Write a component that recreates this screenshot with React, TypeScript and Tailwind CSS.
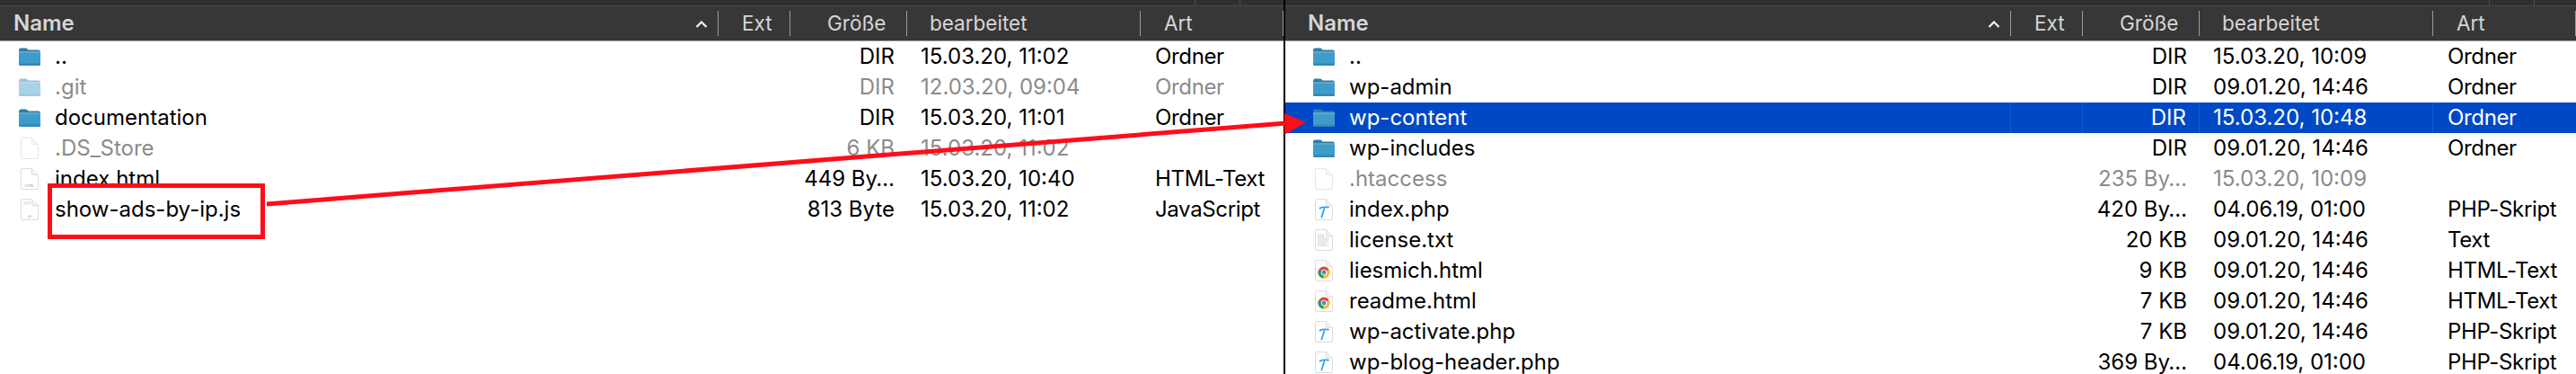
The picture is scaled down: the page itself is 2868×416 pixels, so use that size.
type Kind = "folder" | "blank" | "html" | "js" | "php" | "txt" | "chrome";

type Row = {
  icon: Kind;
  name: string;
  size: string;
  date: string;
  type: string;
  muted?: boolean;
  selected?: boolean;
};

const leftRows: Row[] = [
  { icon: "folder", name: "..", size: "DIR", date: "15.03.20, 11:02", type: "Ordner" },
  { icon: "folder", name: ".git", size: "DIR", date: "12.03.20, 09:04", type: "Ordner", muted: true },
  { icon: "folder", name: "documentation", size: "DIR", date: "15.03.20, 11:01", type: "Ordner" },
  { icon: "blank", name: ".DS_Store", size: "6 KB", date: "15.03.20, 11:02", type: "", muted: true },
  { icon: "html", name: "index.html", size: "449 By…", date: "15.03.20, 10:40", type: "HTML-Text" },
  { icon: "js", name: "show-ads-by-ip.js", size: "813 Byte", date: "15.03.20, 11:02", type: "JavaScript" },
];

const rightRows: Row[] = [
  { icon: "folder", name: "..", size: "DIR", date: "15.03.20, 10:09", type: "Ordner" },
  { icon: "folder", name: "wp-admin", size: "DIR", date: "09.01.20, 14:46", type: "Ordner" },
  { icon: "folder", name: "wp-content", size: "DIR", date: "15.03.20, 10:48", type: "Ordner", selected: true },
  { icon: "folder", name: "wp-includes", size: "DIR", date: "09.01.20, 14:46", type: "Ordner" },
  { icon: "blank", name: ".htaccess", size: "235 By…", date: "15.03.20, 10:09", type: "", muted: true },
  { icon: "php", name: "index.php", size: "420 By…", date: "04.06.19, 01:00", type: "PHP-Skript" },
  { icon: "txt", name: "license.txt", size: "20 KB", date: "09.01.20, 14:46", type: "Text" },
  { icon: "chrome", name: "liesmich.html", size: "9 KB", date: "09.01.20, 14:46", type: "HTML-Text" },
  { icon: "chrome", name: "readme.html", size: "7 KB", date: "09.01.20, 14:46", type: "HTML-Text" },
  { icon: "php", name: "wp-activate.php", size: "7 KB", date: "09.01.20, 14:46", type: "PHP-Skript" },
  { icon: "php", name: "wp-blog-header.php", size: "369 By…", date: "04.06.19, 01:00", type: "PHP-Skript" },
];

function FolderIcon({ muted }: { muted?: boolean }) {
  return (
    <svg width="24" height="20" viewBox="0 0 24 20" className={muted ? "opacity-45" : ""}>
      <path d="M0 3 Q0 0.5 2 0.5 H8 Q9.5 0.5 10 2 L10.5 2.5 H22 Q24 2.5 24 5 V8 H0 Z" fill="#2f7ea6" />
      <path d="M0 5.5 H24 V18 Q24 20 22 20 H2 Q0 20 0 18 Z" fill="#3d9ccb" />
      <rect x="0" y="4.5" width="24" height="1" fill="#8fc6de" />
      <rect x="0" y="17.5" width="24" height="2.5" rx="1.5" fill="#3588b3" />
    </svg>
  );
}

function ChromeGlyph() {
  return (
    <g>
      <circle cx="10" cy="14" r="6.5" fill="#e2463a" />
      <path d="M10 14 L4.4 10.8 A6.5 6.5 0 0 0 9.2 20.45 Z" fill="#2f9d4e" />
      <path d="M10 14 L15.65 10.8 A6.5 6.5 0 0 1 9.2 20.45 Z" fill="#f5c534" />
      <circle cx="10" cy="14" r="3.2" fill="#fff" />
      <circle cx="10" cy="14" r="2.4" fill="#4a86e8" />
    </g>
  );
}

function FileIcon({ kind, muted }: { kind: Kind; muted?: boolean }) {
  return (
    <svg width="20" height="24" viewBox="0 0 20 24" className={muted ? "opacity-70" : ""}>
      <path
        d="M1.5 0.5 H12.5 L19.5 7.5 V22 Q19.5 23.5 18 23.5 H2 Q0.5 23.5 0.5 22 V1.5 Q0.5 0.5 1.5 0.5 Z"
        fill="#fff"
        stroke="#dcdcdc"
      />
      <path d="M12.5 0.5 V6 Q12.5 7.5 14 7.5 H19.5" fill="#f3f3f3" stroke="#dcdcdc" />
      {kind === "html" && (
        <text x="10" y="20.5" textAnchor="middle" fontSize="3.6" fill="#9a9a9a" fontFamily="Inter, sans-serif">
          HTML
        </text>
      )}
      {kind === "js" && (
        <>
          <rect x="3" y="3" width="8" height="4" fill="#ececec" />
          <text x="10" y="20.5" textAnchor="middle" fontSize="3.6" fill="#9a9a9a" fontFamily="Inter, sans-serif">
            JS
          </text>
        </>
      )}
      {kind === "php" && (
        <path d="M5.5 10.6 Q10 8.6 15 9.6 M10.8 9.6 L7.4 20.5" fill="none" stroke="#19a2ee" strokeWidth="1.7" strokeLinecap="round" />
      )}
      {kind === "txt" && (
        <path
          d="M3 6 H10 M3 8 H11 M3 10 H16 M3 12 H15 M3 14 H16 M3 16 H13 M3 18 H15"
          stroke="#c4c4c4"
          strokeWidth="0.9"
          strokeDasharray="2 0.6"
        />
      )}
      {kind === "chrome" && <ChromeGlyph />}
    </svg>
  );
}

function RowIcon({ row }: { row: Row }) {
  if (row.icon === "folder") return <FolderIcon muted={row.muted} />;
  return (
    <span className="flex w-6 justify-center">
      <FileIcon kind={row.icon} muted={row.muted} />
    </span>
  );
}

function HeaderCell({ className, children }: { className: string; children: React.ReactNode }) {
  return (
    <div className={`relative flex h-full items-center ${className}`}>
      {children}
      <span className="absolute top-[5px] right-0 h-[28px] w-px bg-[#9c9c9c]" />
    </div>
  );
}

function Pane({ rows, nameCol, namePad, className }: { rows: Row[]; nameCol: string; namePad: string; className: string }) {
  return (
    <div className={`flex shrink-0 flex-col ${className}`}>
      <div className="h-[6px] shrink-0 bg-[#2f2f2f]" />
      <div className="h-px shrink-0 bg-[#4c4c4c]" />
      <div className="flex h-[39px] shrink-0 items-center border-b border-[#a3a3a3] bg-[#373737] text-[22.5px] text-[#d6d6d6]">
        <HeaderCell className={`${nameCol} justify-between pr-[12px] text-[24px] font-semibold ${namePad}`}>
          <span>Name</span>
          <svg width="14" height="8" viewBox="0 0 14 8" className="mt-px" fill="none">
            <path d="M1.5 7 L7 1.5 L12.5 7" stroke="#f2f2f2" strokeWidth="2.2" />
          </svg>
        </HeaderCell>
        <HeaderCell className="w-[80px] pl-[26px]">Ext</HeaderCell>
        <HeaderCell className="w-[130px] pl-[41px]">Größe</HeaderCell>
        <HeaderCell className="w-[260px] pl-[25px]">bearbeitet</HeaderCell>
        <HeaderCell className="w-[159px] pl-[26px]">Art</HeaderCell>
      </div>
      {rows.map((row) => (
        <div
          key={row.name}
          className={`flex h-[34px] shrink-0 items-center ${row.selected ? "bg-[#0049c6] text-white" : row.muted ? "text-[#8b8b8b]" : "text-black"}`}
        >
          <div className={`flex h-full ${nameCol} items-center ${namePad} ${row.selected ? "border-r border-[#1a5bcb]" : ""}`}>
            <span className="ml-[6px] mr-[16px] flex w-6 justify-center">
              <RowIcon row={row} />
            </span>
            <span className="truncate">{row.name}</span>
          </div>
          <div className={`h-full w-[80px] ${row.selected ? "border-r border-[#1a5bcb]" : ""}`} />
          <div className={`flex h-full w-[130px] items-center justify-end pr-[14px] ${row.selected ? "border-r border-[#1a5bcb]" : ""}`}>
            {row.size}
          </div>
          <div className={`flex h-full w-[260px] items-center pl-[15px] ${row.selected ? "border-r border-[#1a5bcb]" : ""}`}>
            {row.date}
          </div>
          <div className="flex h-full w-[159px] items-center pl-[16px] tracking-[-0.35px]">{row.type}</div>
        </div>
      ))}
    </div>
  );
}

export default function App() {
  return (
    <div className="relative flex h-[416px] w-[2868px] overflow-hidden bg-white font-['Inter',sans-serif] text-[24px]">
      <Pane rows={leftRows} nameCol="w-[800px]" namePad="pl-[15px]" className="w-[1429px]" />
      <div className="w-[2px] shrink-0 bg-black" />
      <Pane rows={rightRows} nameCol="w-[808px]" namePad="pl-[25px]" className="w-[1437px]" />

      {/* window ticks in the strip above the headers */}
      <span className="absolute top-0 left-[1330px] h-[6px] w-px bg-[#4c4c4c]" />
      <span className="absolute top-0 left-[1380px] h-[6px] w-px bg-[#4c4c4c]" />
      <span className="absolute top-0 left-[2771px] h-[6px] w-px bg-[#4c4c4c]" />
      <span className="absolute top-0 left-[2821px] h-[6px] w-px bg-[#4c4c4c]" />

      {/* red annotation */}
      <div className="absolute top-[204px] left-[53px] h-[62px] w-[242px] border-[5px] border-[#ff0d1a]" />
      <svg className="absolute top-0 left-0" width="2868" height="416">
        <path d="M297 227 L1432 137" stroke="#ff0d1a" strokeWidth="5" />
        <path d="M1430 126 L1454 136 L1430 150 Z" fill="#ff0d1a" />
      </svg>
    </div>
  );
}
